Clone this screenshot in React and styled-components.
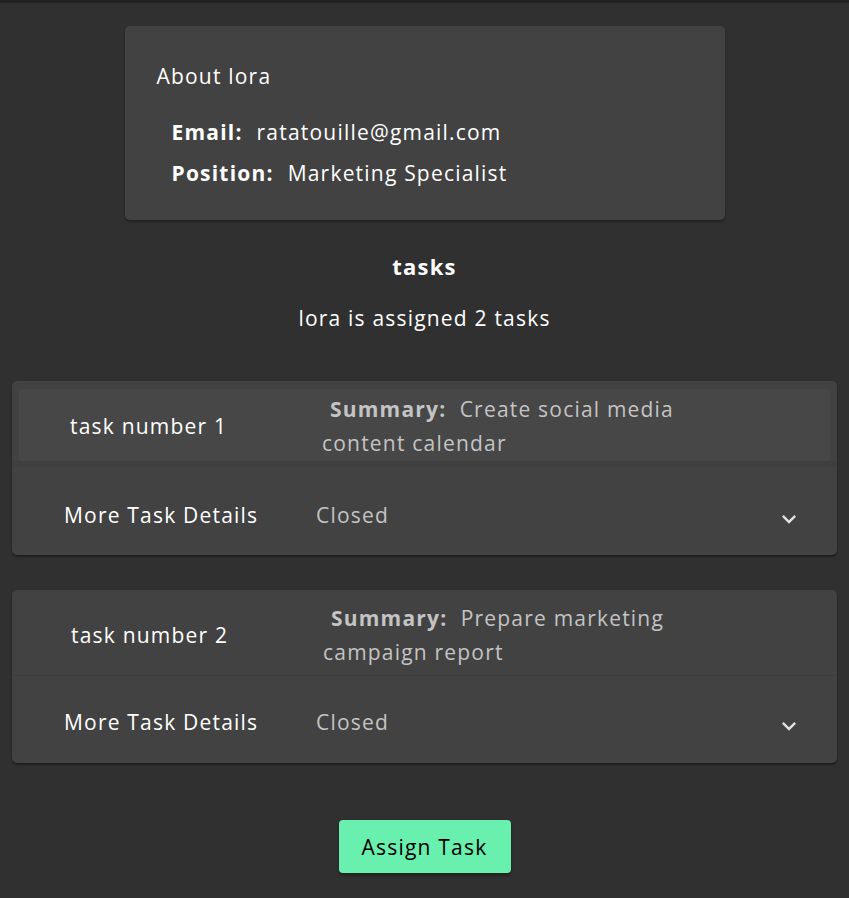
import React from 'react';
import styled, { createGlobalStyle } from 'styled-components';

const GlobalStyle = createGlobalStyle`
  html, body {
    margin: 0;
    padding: 0;
    background: #303030;
    font-family: "Open Sans", Lato, sans-serif;
    letter-spacing: 1.2px;
    color: #ffffff;
  }
`;

const TopBar = styled.div`
  height: 3px;
  background: #212121;
`;

const Page = styled.div`
  min-height: 895px;
  display: flex;
  flex-direction: column;
  align-items: center;
  padding: 23px 12px 0;
  box-sizing: border-box;
`;

const AboutCard = styled.div`
  width: 600px;
  box-sizing: border-box;
  background: #424242;
  border-radius: 5px;
  box-shadow: 0 2px 2px rgba(0, 0, 0, 0.3);
  padding: 34px 32px 26px;
`;

const AboutTitle = styled.div`
  font-size: 21px;
  line-height: 32px;
  margin-bottom: 20px;
`;

const InfoRow = styled.div`
  display: flex;
  gap: 14px;
  padding-left: 15px;
  font-size: 21px;
  line-height: 41px;
`;

const Label = styled.span`
  font-weight: 700;
`;

const SectionTitle = styled.div`
  margin-top: 30px;
  font-size: 22px;
  font-weight: 700;
  line-height: 32px;
`;

const Subtitle = styled.div`
  margin-top: 20px;
  font-size: 21px;
  line-height: 32px;
  margin-bottom: 47px;
`;

const Accordion = styled.div`
  width: 100%;
  background: #424242;
  border-radius: 5px;
  box-shadow: 0 2px 2px rgba(0, 0, 0, 0.35);
  padding: ${({ focused }) => (focused ? '8px 7px 0' : '0')};
  box-sizing: border-box;
  margin-bottom: 35px;
`;

const SummaryRow = styled.div`
  display: flex;
  align-items: center;
  box-sizing: border-box;
  height: ${({ focused }) => (focused ? '72px' : '86px')};
  background: ${({ focused }) => (focused ? '#474747' : 'transparent')};
  border-radius: 4px;
  padding: ${({ focused }) => (focused ? '2px 0 0 51px' : '4px 0 0 59px')};
  border-bottom: ${({ focused }) => (focused ? 'none' : '1px solid #3d3d3d')};
`;

const TaskName = styled.div`
  width: 252px;
  font-size: 21px;
`;

const SummaryText = styled.div`
  width: 380px;
  font-size: 21px;
  line-height: 34px;
  color: #c4c4c4;
`;

const Indent = styled.span`
  display: inline-block;
  width: 8px;
`;

const DetailsRow = styled.div`
  display: flex;
  align-items: center;
  height: ${({ focused }) => (focused ? '94px' : '87px')};
  padding: ${({ focused }) => (focused ? '7px 34px 0 52px' : '4px 34px 0 52px')};
  margin: ${({ focused }) => (focused ? '0 -7px' : '0')};
  border-top: ${({ focused }) => (focused ? '6px solid #3f3f3f' : 'none')};
  box-sizing: border-box;
`;

const DetailsLabel = styled.div`
  width: 252px;
  font-size: 21px;
`;

const Status = styled.div`
  flex: 1;
  font-size: 21px;
  color: #c4c4c4;
`;

const Chevron = styled.svg`
  width: 28px;
  height: 28px;
  margin-top: 8px;
`;

const AssignButton = styled.button`
  margin-top: 22px;
  width: 172px;
  height: 53px;
  border: none;
  border-radius: 4px;
  background: #69f0ae;
  color: #000;
  font-family: inherit;
  letter-spacing: 1.2px;
  font-size: 21px;
  box-shadow: 0 3px 3px rgba(0, 0, 0, 0.3);
  cursor: pointer;
`;

const tasks = [
  { id: 1, summary: 'Create social media content calendar', status: 'Closed' },
  { id: 2, summary: 'Prepare marketing campaign report', status: 'Closed' },
];

export default function App() {
  return (
    <>
      <GlobalStyle />
      <TopBar />
      <Page>
        <AboutCard>
          <AboutTitle>About lora</AboutTitle>
          <InfoRow>
            <Label>Email:</Label>
            <span>ratatouille@gmail.com</span>
          </InfoRow>
          <InfoRow>
            <Label>Position:</Label>
            <span>Marketing Specialist</span>
          </InfoRow>
        </AboutCard>
        <SectionTitle>tasks</SectionTitle>
        <Subtitle>lora is assigned 2 tasks</Subtitle>
        {tasks.map((t, i) => {
          const focused = i === 0;
          return (
            <Accordion key={t.id} focused={focused}>
              <SummaryRow focused={focused}>
                <TaskName>task number {t.id}</TaskName>
                <SummaryText>
                  <Indent />
                  <Label>Summary:</Label>&nbsp;&nbsp;{t.summary}
                </SummaryText>
              </SummaryRow>
              <DetailsRow focused={focused}>
                <DetailsLabel>More Task Details</DetailsLabel>
                <Status>{t.status}</Status>
                <Chevron viewBox="0 0 24 24">
                  <path d="M7.41 8.59 12 13.17l4.59-4.58L18 10l-6 6-6-6z" fill="#e0e0e0" />
                </Chevron>
              </DetailsRow>
            </Accordion>
          );
        })}
        <AssignButton>Assign Task</AssignButton>
      </Page>
    </>
  );
}
